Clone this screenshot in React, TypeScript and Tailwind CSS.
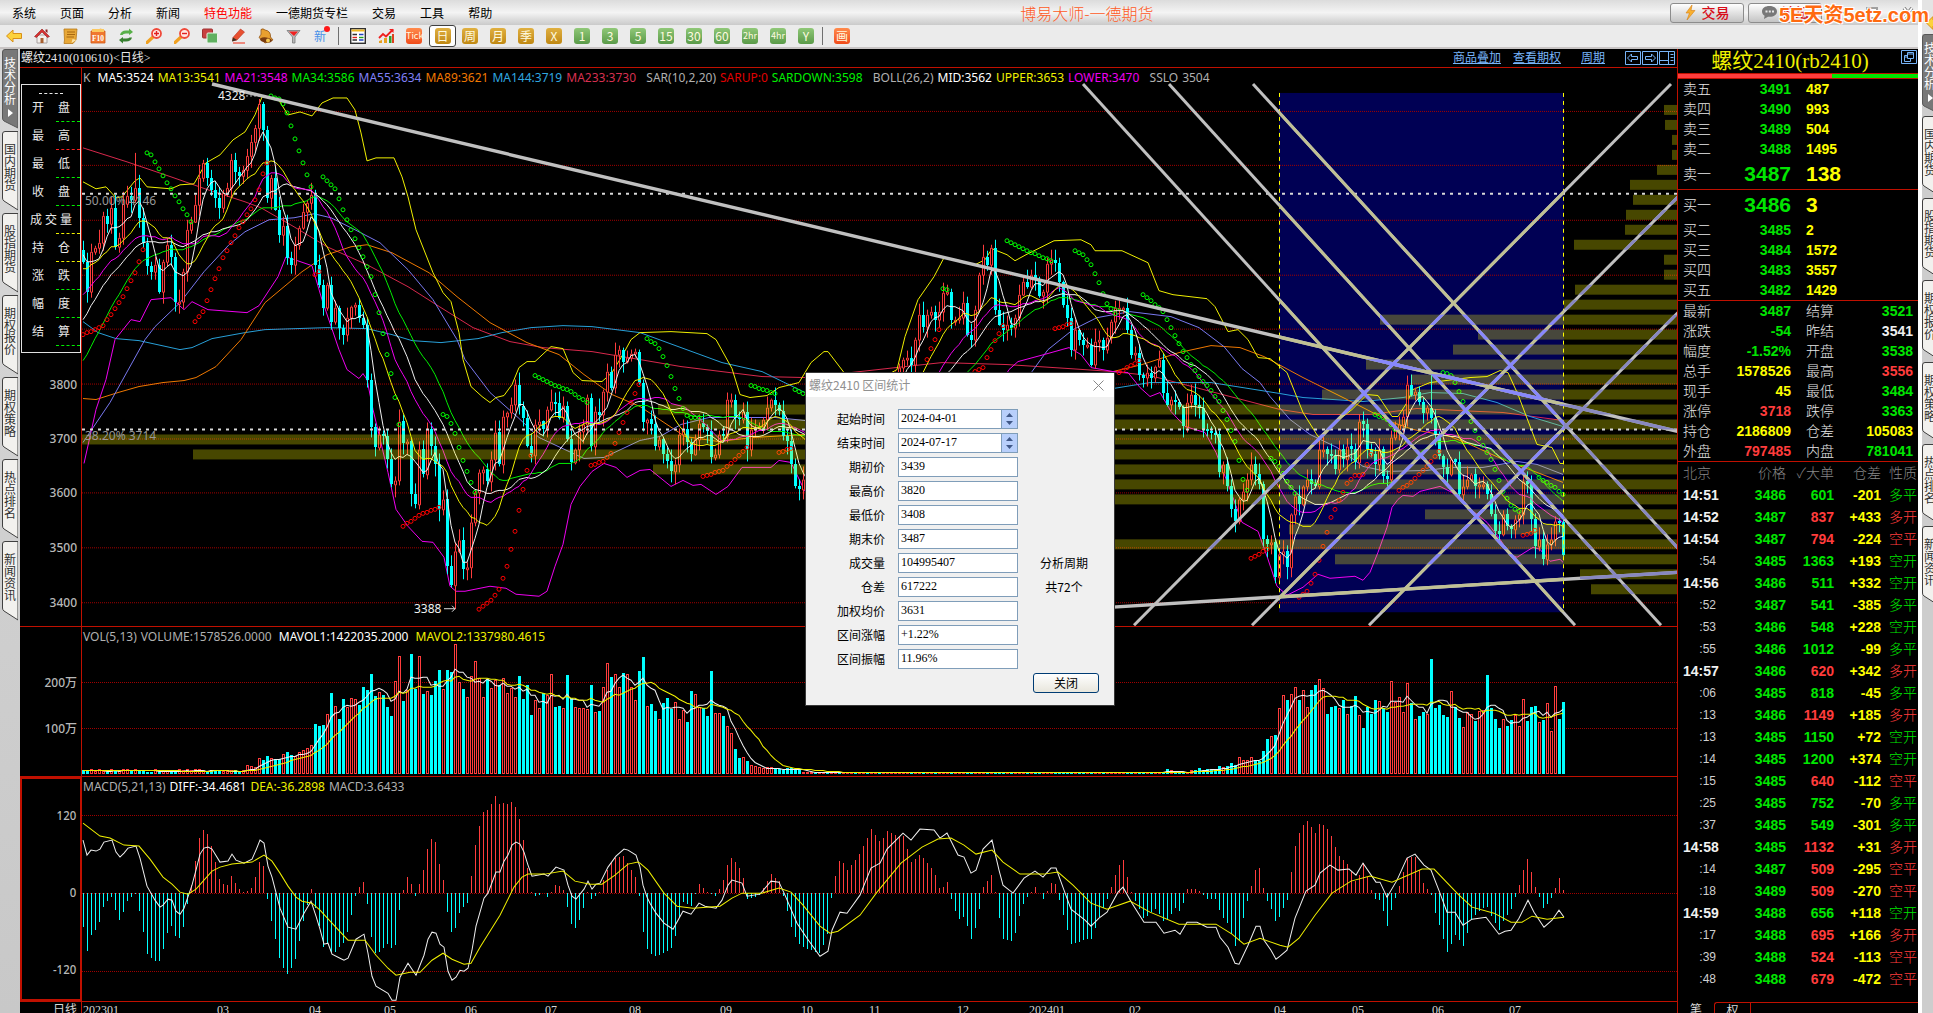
import React from "react";

type Pt = [number, number];

const CJK = "font-['Noto_Sans_CJK_SC',sans-serif]";
const LATIN = "font-['Noto_Sans','Noto_Sans_CJK_SC',sans-serif]";
const NUM = "font-['Liberation_Sans','Noto_Sans_CJK_SC',sans-serif]";
const SONG = "font-['Liberation_Serif','Noto_Sans_CJK_SC',serif]";

/* ---------- chart data: one value for each trading day, in chart units ---------- */

const X0 = 83;
const STEP = 4;

// closes of the days before the first visible bar, used to seed the averages
const SEED = [
  520, 515, 512, 505, 500, 495, 488, 480, 470, 452, 440, 425, 410, 395, 372, 360, 348, 340, 330, 322, 316, 306, 300,
  292, 286, 280, 276, 270, 262, 258, 256, 255, 252, 250,
];

const CLOSES = [
  262, 292, 252, 248, 243, 216, 224, 208, 247, 238, 204, 196, 200, 188, 218, 243, 266, 272, 265, 292, 262, 245, 257,
  302, 302, 272, 230, 222, 205, 178, 163, 178, 190, 198, 208, 193, 188, 160, 172, 176, 170, 156, 142, 128, 104, 130,
  198, 178, 210, 235, 226, 258, 265, 245, 228, 212, 203, 195, 265, 285, 308, 285, 322, 308, 328, 335, 318, 307, 305,
  318, 325, 380, 428, 448, 435, 437, 460, 485, 481, 422, 444, 442, 495, 505, 450, 475, 430, 447, 465, 510, 500, 567,
  586, 552, 541, 570, 568, 523, 493, 473, 470, 482, 460, 433, 465, 417, 413, 405, 385, 406, 418, 447, 456, 425, 422,
  430, 410, 402, 403, 418, 406, 440, 463, 450, 432, 425, 398, 447, 412, 415, 392, 372, 388, 355, 350, 362, 358, 354,
  352, 383, 423, 420, 425, 447, 440, 455, 462, 472, 465, 435, 430, 443, 455, 440, 424, 428, 432, 458, 455, 435, 437,
  400, 400, 418, 420, 412, 450, 430, 428, 427, 420, 408, 400, 405, 411, 437, 442, 465, 487, 490, 480, 478, 472, 476,
  468, 462, 465, 455, 450, 452, 444, 440, 436, 440, 432, 428, 430, 424, 420, 422, 412, 400, 390, 376, 368, 360, 358,
  365, 340, 315, 327, 315, 312, 320, 312, 293, 292, 320, 320, 318, 303, 335, 340, 310, 275, 257, 265, 248, 310, 325,
  330, 325, 328, 318, 295, 282, 287, 275, 280, 296, 292, 264, 260, 263, 282, 305, 318, 350, 330, 340, 345, 345, 365,
  342, 340, 350, 338, 322, 308, 308, 308, 330, 355, 353, 375, 378, 373, 378, 367, 360, 393, 405, 400, 402, 407, 427,
  403, 395, 405, 408, 430, 432, 434, 435, 473, 465, 487, 510, 522, 500, 492, 480, 465, 475, 485, 540, 545, 543, 578,
  555, 552, 568, 515, 497, 505, 487, 480, 485, 487, 450, 450, 455, 456, 470, 450, 460, 447, 450, 463, 422, 425, 450,
  455, 465, 450, 477, 480, 438, 430, 425, 417, 385, 395, 392, 402, 413, 408, 418, 435, 457, 468, 475, 460, 463, 495,
  487, 480, 475, 487, 485, 485, 495, 515, 532, 535, 515, 527, 530, 520, 515, 482, 485, 520, 547, 540, 560, 545, 540,
  522, 523, 556,
];

const VOL_RUNS: [number, number[]][] = [
  [
    247,
    [
      7, 6, 5, 14, 13, 17, 14, 14, 14, 18, 21, 18, 16, 20, 22, 24, 27, 49, 47, 48, 58, 80, 66, 54, 74, 65, 74, 73, 68,
      86, 83, 99, 77, 80, 78, 66, 57, 91, 116, 72, 82, 119, 84, 116, 79, 81, 78, 92, 103, 83, 103, 101, 128, 90, 84,
      75, 96, 111, 94, 75, 94, 84, 92, 88, 94, 79, 84, 75, 97, 74, 88, 58, 72, 64, 80, 77, 98, 66, 67, 64, 98, 75, 65,
      64, 64, 63, 88, 60, 62, 85, 109, 96, 98, 85, 100, 98, 85, 72, 102, 116, 66, 69, 62, 53, 70, 75, 64, 70, 53, 62,
      51, 82, 78, 65, 65, 57, 102, 59, 59, 57, 46, 39, 24, 15, 15, 12, 7, 6, 5, 4, 5, 5, 5, 4, 3, 5, 5, 4, 3,
    ],
  ],
  [
    1163,
    [
      2, 4, 2, 1, 1, 1, 1, 2, 3, 5, 2, 4, 4, 4, 7, 5, 7, 10, 8, 15, 12, 12, 15, 13, 12, 22, 34, 36, 38, 64, 77, 73,
      78, 85, 73, 82, 65, 83, 88, 93, 84, 59, 66, 67, 64, 73, 58, 67, 77, 57, 45, 66, 59, 73, 71, 65, 61, 91, 70, 75,
      60, 89, 70, 53, 57, 61, 58, 114, 65, 68, 58, 56, 81, 66, 55, 45, 60, 58, 52, 61, 62, 98, 65, 54, 45, 53, 47, 53,
      57, 46, 73, 52, 66, 67, 50, 53, 69, 41, 86, 54, 71,
    ],
  ],
];

const UPPER: Pt[] = [
  [83, 182], [96, 189], [106, 187], [116, 198], [122, 197], [135, 181], [140, 178], [147, 187], [171, 189],
  [180, 185], [194, 184], [206, 163], [220, 155], [233, 140], [245, 132], [255, 115], [262, 97], [278, 99],
  [288, 115], [300, 112], [312, 116], [322, 103], [333, 98], [347, 98], [355, 110], [361, 133], [367, 161],
  [376, 158], [394, 158], [402, 177], [408, 197], [416, 230], [433, 273], [443, 293], [451, 302], [459, 333],
  [463, 360], [471, 387], [482, 397], [490, 403], [496, 398], [504, 396], [512, 385], [519, 368], [527, 362],
  [535, 362], [551, 347], [563, 349], [573, 373], [582, 381], [602, 382], [612, 373], [624, 353], [631, 340],
  [640, 333], [671, 332], [707, 334], [716, 340], [732, 369], [740, 395], [750, 398], [767, 396], [779, 388],
  [799, 383], [811, 363], [824, 352], [828, 352], [844, 373], [870, 385], [897, 370], [905, 337], [918, 300],
  [934, 277], [944, 258], [956, 260], [975, 265], [985, 260], [992, 249], [1007, 255], [1015, 261], [1026, 255],
  [1054, 241], [1081, 240], [1091, 245], [1095, 251], [1122, 251], [1148, 263], [1159, 291], [1173, 295],
  [1207, 299], [1215, 307], [1228, 332], [1238, 330], [1248, 340], [1258, 358], [1270, 359], [1287, 373],
  [1303, 413], [1318, 437], [1323, 437], [1337, 422], [1352, 410], [1367, 395], [1378, 396], [1392, 417],
  [1398, 417], [1407, 403], [1413, 390], [1430, 383], [1470, 378], [1487, 377], [1500, 371], [1508, 373],
  [1518, 395], [1537, 445], [1552, 448], [1560, 464], [1563, 464],
];

const LOWER: Pt[] = [
  [84, 464], [96, 410], [106, 380], [115, 340], [131, 320], [140, 322], [151, 300], [171, 298], [184, 310],
  [192, 302], [208, 310], [247, 313], [259, 306], [278, 277], [286, 257], [312, 266], [322, 300], [339, 350],
  [347, 370], [359, 379], [363, 374], [367, 380], [373, 410], [388, 473], [396, 510], [408, 527], [422, 542],
  [433, 543], [444, 558], [450, 587], [456, 592], [465, 592], [490, 587], [506, 589], [516, 595], [539, 597],
  [547, 592], [555, 567], [563, 545], [571, 505], [580, 487], [592, 472], [604, 464], [616, 468], [627, 478],
  [640, 471], [650, 470], [671, 487], [683, 481], [693, 486], [701, 485], [716, 495], [728, 487], [742, 468],
  [771, 468], [779, 461], [791, 463], [805, 492], [840, 520], [900, 500], [980, 420], [1009, 370], [1018, 362],
  [1044, 355], [1069, 348], [1081, 355], [1091, 368], [1113, 372], [1128, 373], [1140, 388], [1150, 397],
  [1160, 393], [1171, 412], [1185, 427], [1205, 433], [1216, 453], [1230, 490], [1242, 523], [1258, 532],
  [1267, 557], [1277, 587], [1287, 596], [1303, 588], [1318, 575], [1330, 579], [1355, 577], [1363, 581],
  [1370, 573], [1378, 553], [1387, 528], [1392, 508], [1398, 500], [1403, 496], [1413, 497], [1420, 492],
  [1440, 487], [1452, 493], [1467, 507], [1487, 523], [1500, 540], [1510, 555], [1517, 558], [1533, 548],
  [1540, 550], [1550, 562], [1560, 560], [1563, 563],
];

const MA55: Pt[] = [
  [83, 443], [110, 403], [145, 340], [155, 327], [180, 303], [204, 272], [229, 245], [245, 232], [269, 220],
  [294, 218], [314, 214], [331, 218], [355, 230], [380, 243], [408, 270], [433, 300], [457, 340], [465, 360],
  [490, 393], [518, 418], [539, 438], [571, 453], [584, 459], [604, 458], [640, 441], [660, 437], [681, 425],
  [709, 418], [775, 418], [805, 421], [900, 455], [990, 420], [1032, 372], [1048, 350], [1073, 330], [1097, 318],
  [1130, 312], [1171, 317], [1199, 328], [1224, 347], [1242, 369], [1260, 383], [1270, 397], [1290, 420],
  [1310, 435], [1337, 448], [1363, 467], [1387, 472], [1427, 471], [1450, 468], [1483, 468], [1517, 462],
  [1537, 465], [1563, 475],
];

const MA89: Pt[] = [
  [83, 399], [96, 400], [118, 393], [139, 387], [163, 383], [184, 381], [196, 378], [216, 367], [241, 340],
  [265, 303], [302, 272], [327, 255], [351, 247], [367, 245], [392, 253], [429, 273], [457, 297], [490, 323],
  [527, 343], [559, 355], [584, 375], [612, 395], [640, 407], [664, 423], [685, 437], [718, 442], [754, 438],
  [805, 435], [900, 430], [1000, 400], [1113, 372], [1142, 365], [1179, 353], [1211, 346], [1240, 348],
  [1264, 357], [1303, 378], [1337, 395], [1357, 405], [1390, 422], [1413, 430], [1450, 437], [1470, 445],
  [1503, 460], [1537, 473], [1563, 483],
];

const MA144: Pt[] = [
  [83, 322], [98, 333], [116, 339], [139, 341], [180, 350], [192, 348], [212, 339], [245, 333], [265, 330],
  [327, 328], [367, 329], [392, 335], [412, 341], [441, 343], [478, 339], [502, 333], [531, 328], [563, 326],
  [592, 327], [640, 333], [681, 348], [722, 363], [762, 372], [805, 393], [900, 405], [1000, 400], [1113, 389],
  [1150, 383], [1211, 383], [1280, 394], [1303, 398], [1363, 402], [1403, 398], [1430, 393], [1463, 394],
  [1497, 403], [1530, 417], [1563, 427],
];

const MA233: Pt[] = [
  [83, 148], [127, 162], [171, 177], [208, 190], [245, 202], [261, 208], [294, 227], [327, 247], [367, 265],
  [408, 287], [441, 308], [473, 328], [510, 342], [543, 348], [592, 352], [640, 360], [681, 367], [762, 377],
  [805, 378], [860, 372], [905, 367], [942, 363], [1007, 365], [1069, 369], [1113, 372], [1150, 376], [1211, 392],
  [1280, 410], [1313, 415], [1370, 415], [1417, 409], [1457, 411], [1503, 413], [1563, 421],
];

const DIFF: Pt[] = [
  [83, 840], [87, 855], [91, 850], [96, 851], [100, 849], [104, 842], [112, 840], [116, 852], [120, 857],
  [124, 853], [128, 848], [136, 846], [140, 858], [147, 886], [155, 900], [160, 907], [163, 905], [168, 899],
  [172, 900], [176, 911], [180, 914], [184, 908], [192, 885], [196, 870], [200, 854], [204, 848], [208, 847],
  [212, 849], [220, 862], [228, 861], [232, 854], [236, 860], [244, 863], [252, 859], [256, 850], [260, 840],
  [264, 843], [268, 866], [272, 877], [280, 908], [288, 927], [296, 929], [304, 913], [311, 901], [316, 916],
  [320, 929], [324, 944], [328, 943], [332, 954], [340, 958], [344, 960], [348, 958], [356, 939], [364, 934],
  [368, 953], [372, 976], [376, 986], [388, 993], [392, 1000], [396, 1000], [400, 977], [408, 963], [416, 975],
  [424, 955], [428, 939], [432, 932], [436, 933], [440, 944], [444, 947], [448, 971], [452, 980], [456, 977],
  [460, 970], [464, 971], [468, 968], [472, 950], [476, 926], [484, 898], [488, 893], [496, 872], [500, 872],
  [504, 861], [508, 855], [512, 845], [516, 842], [520, 844], [524, 852], [528, 865], [532, 876], [544, 874],
  [548, 876], [556, 867], [564, 870], [568, 885], [572, 896], [576, 899], [584, 889], [588, 881], [592, 889],
  [596, 884], [600, 883], [608, 867], [616, 856], [624, 849], [628, 850], [636, 855], [640, 867], [643, 885],
  [647, 897], [650, 903], [656, 913], [664, 923], [673, 929], [683, 911], [691, 914], [699, 903], [705, 906],
  [716, 908], [722, 900], [728, 885], [732, 880], [742, 883], [747, 896], [760, 894], [771, 881], [779, 882],
  [785, 895], [797, 923], [807, 938], [820, 956], [828, 951], [832, 930], [840, 912], [847, 913], [860, 895],
  [871, 868], [880, 863], [887, 849], [903, 833], [911, 840], [920, 829], [934, 830], [940, 838], [947, 833],
  [958, 855], [964, 857], [971, 873], [976, 870], [983, 849], [992, 840], [999, 870], [1003, 885], [1013, 893],
  [1024, 878], [1035, 871], [1043, 877], [1051, 868], [1056, 868], [1064, 890], [1071, 909], [1085, 920],
  [1091, 926], [1099, 918], [1107, 912], [1118, 892], [1123, 887], [1132, 903], [1144, 922], [1156, 922],
  [1164, 933], [1175, 930], [1180, 934], [1187, 922], [1197, 922], [1207, 927], [1216, 927], [1220, 937],
  [1228, 947], [1235, 963], [1239, 964], [1248, 945], [1256, 926], [1260, 926], [1264, 940], [1271, 950],
  [1276, 959], [1280, 956], [1287, 950], [1295, 918], [1306, 891], [1315, 885], [1320, 873], [1330, 865],
  [1338, 870], [1349, 869], [1356, 875], [1363, 863], [1376, 882], [1380, 882], [1387, 897], [1397, 880],
  [1407, 858], [1415, 854], [1424, 865], [1431, 870], [1440, 893], [1447, 912], [1455, 912], [1463, 925],
  [1472, 919], [1486, 917], [1499, 934], [1505, 931], [1511, 930], [1519, 918], [1528, 900], [1534, 912],
  [1544, 927], [1552, 920], [1559, 910], [1564, 917],
];

const DEA: Pt[] = [
  [83, 823], [100, 836], [110, 838], [124, 845], [139, 846], [150, 859], [163, 877], [172, 884], [180, 892],
  [188, 894], [196, 889], [212, 871], [220, 867], [232, 864], [252, 862], [264, 855], [272, 861], [280, 873],
  [288, 886], [296, 897], [302, 901], [312, 903], [320, 910], [332, 923], [348, 940], [365, 940], [376, 955],
  [388, 968], [396, 975], [410, 972], [420, 972], [432, 960], [443, 953], [452, 959], [464, 964], [471, 963],
  [480, 947], [500, 915], [514, 887], [522, 877], [528, 874], [545, 874], [563, 871], [575, 881], [590, 884],
  [602, 884], [615, 875], [628, 864], [638, 862], [640, 863], [648, 870], [664, 893], [677, 906], [693, 908],
  [720, 906], [732, 898], [742, 893], [762, 893], [779, 888], [791, 892], [803, 905], [820, 926], [830, 933],
  [838, 931], [860, 915], [877, 892], [901, 863], [922, 847], [938, 839], [951, 838], [964, 845], [976, 854],
  [992, 850], [1003, 862], [1020, 874], [1044, 874], [1058, 872], [1073, 885], [1091, 903], [1107, 909],
  [1130, 901], [1150, 912], [1179, 924], [1216, 924], [1232, 934], [1244, 944], [1260, 938], [1280, 945],
  [1288, 947], [1299, 938], [1315, 915], [1332, 893], [1351, 881], [1370, 876], [1392, 882], [1422, 869],
  [1434, 869], [1459, 895], [1472, 907], [1494, 913], [1511, 922], [1522, 922], [1532, 916], [1547, 919],
  [1564, 917],
];

const SAR_DOWN: Pt[][] = [
  [[147, 153], [151, 155], [155, 162], [167, 183], [180, 204], [191, 222]],
  [[271, 96], [279, 99], [284, 105], [288, 116], [296, 142], [304, 166], [311, 187]],
  [[323, 177], [335, 189], [351, 230], [363, 257], [371, 277], [380, 318], [388, 360], [392, 378], [399, 425]],
  [[443, 415], [448, 417], [455, 434], [463, 461], [471, 483], [475, 493]],
  [[535, 376], [551, 384], [571, 392], [587, 403]],
  [[647, 339], [655, 344], [660, 350], [668, 368], [675, 389], [683, 409], [688, 418], [699, 418]],
  [[751, 386], [775, 394]],
  [[795, 390], [803, 394]],
  [[943, 289], [947, 290]],
  [[1007, 241], [1029, 252], [1051, 261]],
  [[1075, 251], [1084, 256], [1091, 265], [1099, 283], [1107, 304], [1115, 314]],
  [
    [1143, 295], [1151, 301], [1163, 312], [1171, 328], [1183, 352], [1199, 377], [1211, 391], [1219, 402],
    [1227, 420], [1235, 442], [1243, 480], [1247, 491],
  ],
  [[1271, 459], [1277, 463], [1287, 482], [1295, 494]],
  [[1375, 415], [1387, 420], [1397, 432]],
  [
    [1443, 373], [1452, 376], [1459, 392], [1471, 422], [1479, 439], [1492, 462], [1503, 492], [1512, 508],
    [1519, 512],
  ],
  [[1539, 478], [1555, 488], [1563, 495]],
];

const SAR_UP: Pt[][] = [
  [[83, 335], [102, 327], [111, 315], [123, 297], [135, 273], [143, 250]],
  [[195, 322], [203, 312], [211, 290], [223, 258], [239, 228], [251, 209], [259, 190], [263, 174], [267, 163]],
  [[315, 275], [319, 272]],
  [[403, 527], [419, 516], [439, 508]],
  [[479, 610], [491, 601], [499, 590], [507, 567], [515, 532], [523, 490], [527, 471], [531, 456]],
  [[591, 466], [603, 462], [612, 453], [620, 430], [628, 410], [636, 392], [640, 383]],
  [[703, 477], [723, 471], [735, 460], [747, 448]],
  [[779, 453], [791, 449]],
  [[927, 360], [931, 349], [939, 330]],
  [[975, 372], [983, 368], [987, 358], [995, 341], [1003, 326]],
  [[1055, 329], [1071, 324]],
  [[1119, 373], [1131, 366], [1139, 361]],
  [[1251, 559], [1267, 550]],
  [
    [1299, 598], [1307, 592], [1315, 575], [1323, 547], [1331, 518], [1339, 501], [1347, 484], [1355, 476],
    [1363, 475], [1371, 455],
  ],
  [[1399, 491], [1411, 483], [1427, 467], [1439, 452]],
  [[1523, 536], [1531, 534], [1535, 531]],
];

// [top, left edge] of each volume-at-price bar; all of them end at the right edge
const PROFILE: Pt[] = [
  [105, 1664], [120, 1665], [135, 1672], [150, 1672], [165, 1657], [180, 1630], [195, 1633], [210, 1626],
  [225, 1625], [240, 1574], [255, 1664], [270, 1664], [285, 1575], [300, 1564], [315, 1380], [330, 1478],
  [345, 1453], [360, 1366], [375, 1411], [390, 1322], [405, 658], [420, 690], [435, 82], [450, 193], [465, 653],
  [480, 1000], [495, 1000], [510, 1425], [525, 1289], [540, 1000], [555, 1335], [570, 1580], [585, 1591],
];

const TRENDS = [
  "M1083 84L1575 626", "M1169 84L1661 626", "M1253 84L1678 549", "M1671 84L1134 626", "M1678 197L1252 626",
  "M1678 313L1369 626",
];
const THICK_TRENDS = ["M212 84L1678 432", "M820 626L1678 573"];

/* ---------- helpers ---------- */

const xAt = (i: number) => X0 + i * STEP;
const at = (pts: Pt[], x: number) => {
  if (x <= pts[0][0]) return pts[0][1];
  for (let i = 1; i < pts.length; i++) {
    if (x <= pts[i][0]) {
      const [ax, ay] = pts[i - 1];
      const [bx, by] = pts[i];
      return ay + ((by - ay) * (x - ax)) / (bx - ax);
    }
  }
  return pts[pts.length - 1][1];
};
const poly = (pts: Pt[]) => pts.map((p) => p.join(",")).join(" ");
const noise = (i: number) => {
  const v = Math.sin(i * 127.1 + 11.7) * 43758.5453;
  return v - Math.floor(v);
};
const average = (n: number): Pt[] => {
  const all = [...SEED, ...CLOSES];
  return CLOSES.map((_, i) => {
    const end = i + SEED.length + 1;
    const win = all.slice(Math.max(0, end - n), end);
    return [xAt(i), Math.round(win.reduce((a, b) => a + b, 0) / win.length)];
  });
};

const volumes = CLOSES.map((_, i) => {
  const x = xAt(i);
  for (const [start, run] of VOL_RUNS) {
    const k = Math.round((x - start) / STEP);
    if (k >= 0 && k < run.length) return run[k];
  }
  return x < 247 ? 2 + Math.round(noise(i)) : 1;
});
const volAverage = (n: number): Pt[] =>
  volumes.map((_, i) => {
    const win = volumes.slice(Math.max(0, i - n + 1), i + 1);
    return [xAt(i), Math.round(774 - win.reduce((a, b) => a + b, 0) / win.length)];
  });

const opens = CLOSES.map((_, i) => (i === 0 ? 250 : CLOSES[i - 1]));
const isUp = (i: number) => CLOSES[i] <= opens[i];

let upBody = "";
let upWick = "";
let downBody = "";
let downWick = "";
let upVol = "";
let downVol = "";
let upMacd = "";
let downMacd = "";
CLOSES.forEach((c, i) => {
  const x = xAt(i);
  const o = opens[i];
  const top = Math.min(c, o);
  const bottom = Math.max(c, o, top + 2);
  let hi = top - Math.round(noise(i) * 12 + 1);
  let lo = bottom + Math.round(noise(i + 900) * 12 + 1);
  if (x === 263 || x === 259) hi = Math.max(hi, 96);
  if (x === 455) lo = 610;
  if (x === 135) hi = 153;
  if (x === 1431) hi = 373;
  if (x === 1407) hi = 376;
  if (isUp(i)) {
    upBody += `M${x - 1} ${top}h2v${bottom - top}h-2z`;
    upWick += `M${x} ${hi}V${top}M${x} ${bottom}V${lo}`;
    upVol += `M${x - 1} ${774 - volumes[i]}h2V774h-2z`;
  } else {
    downBody += `M${x - 1} ${top}h3v${bottom - top}h-3z`;
    downWick += `M${x} ${hi}V${lo}`;
    downVol += `M${x - 1} ${774 - volumes[i]}h3V774h-3z`;
  }
  const m = Math.round(893 - 2 * (at(DEA, x) - at(DIFF, x)));
  if (m < 893) upMacd += `M${x} 893V${m}`;
  else downMacd += `M${x} 893V${m}`;
});

const dots = (runs: Pt[][]) =>
  runs.flatMap((run, r) => {
    const out: React.ReactNode[] = [];
    for (let x = run[0][0]; x <= run[run.length - 1][0]; x += STEP) {
      out.push(<circle key={`${r}-${x}`} cx={x} cy={Math.round(at(run, x))} r="2" />);
    }
    return out;
  });

/* ---------- charts ---------- */

function Grid({ rows }: { rows: number[] }) {
  return (
    <g stroke="#a00000" strokeDasharray="1 1" shapeRendering="crispEdges">
      {rows.map((y) => (
        <path key={y} d={`M82 ${y}.5H1677`} />
      ))}
    </g>
  );
}

function TrendLines({ color }: { color: string }) {
  return (
    <g stroke={color} fill="none">
      {TRENDS.map((d) => (
        <path key={d} d={d} strokeWidth="3" />
      ))}
      {THICK_TRENDS.map((d) => (
        <path key={d} d={d} strokeWidth="3.4" />
      ))}
    </g>
  );
}

function PriceChart() {
  return (
    <svg className="absolute inset-0 size-full" viewBox="82 68 1595 559" preserveAspectRatio="none" aria-label="日线">
      <defs>
        <clipPath id="range">
          <rect x="1279" y="93" width="285" height="520" />
        </clipPath>
        <clipPath id="profile">
          {PROFILE.map(([y, x]) => (
            <rect key={y} x={x} y={y} width={1677 - x} height="10" />
          ))}
        </clipPath>
      </defs>
      <rect x="1279" y="93" width="285" height="520" fill="#000054" />
      <Grid rows={[111, 165, 220, 275, 329, 384, 439, 493, 548, 603]} />
      <g fill="none" strokeWidth="1">
        <polyline points={poly(MA233)} stroke="#d8284c" />
        <polyline points={poly(MA144)} stroke="#28a0d8" />
        <polyline points={poly(MA89)} stroke="#f07800" />
        <polyline points={poly(MA55)} stroke="#7878f0" />
        <polyline points={poly(UPPER)} stroke="#f0f000" />
        <polyline points={poly(LOWER)} stroke="#f000f0" />
      </g>
      <g shapeRendering="crispEdges">
        <path d={upWick} stroke="#ff3c3c" fill="none" transform="translate(.5 0)" />
        <path d={upBody} stroke="#ff3c3c" fill="#000" transform="translate(.5 .5)" />
        <path d={downWick} stroke="#00ffff" fill="none" transform="translate(.5 0)" />
        <path d={downBody} fill="#00ffff" />
      </g>
      <g fill="none" strokeWidth="1">
        <polyline points={poly(average(34))} stroke="#00f000" />
        <polyline points={poly(average(26))} stroke="#f0f0f0" />
        <polyline points={poly(average(21))} stroke="#f000f0" />
        <polyline points={poly(average(13))} stroke="#f0f000" />
        <polyline points={poly(average(5))} stroke="#f0f0f0" />
      </g>
      <g fill="none" stroke="#00ff00">{dots(SAR_DOWN)}</g>
      <g fill="none" stroke="#ff0000">{dots(SAR_UP)}</g>
      <g fill="#ffff00" fillOpacity=".28">
        {PROFILE.map(([y, x]) => (
          <rect key={y} x={x} y={y} width={1677 - x} height="10" />
        ))}
      </g>
      <g stroke="#ffff00" strokeDasharray="4 4">
        <path d="M1279.5 93V613" />
        <path d="M1563.5 93V613" />
      </g>
      <g stroke="#d8d8d8" strokeWidth="2" strokeDasharray="3 5">
        <path d="M82 194H1677" />
        <path d="M82 430H1677" />
      </g>
      <TrendLines color="#c0c0c0" />
      <g clipPath="url(#range)">
        <TrendLines color="#c0c094" />
      </g>
      <g clipPath="url(#profile)">
        <TrendLines color="#8888c0" />
        <g clipPath="url(#range)">
          <TrendLines color="#8888fc" />
        </g>
      </g>
      <g className={`${LATIN} text-[12px]`} fill="#f0f0f0">
        <text x="218" y="100">4328</text>
        <path d="M246 96H262" stroke="#c0c0c0" strokeDasharray="2 2" />
        <text x="414" y="614">3388</text>
        <path d="M444 609.5H455M452 606.5L455 609.5L452 612.5" stroke="#e0e0e0" fill="none" />
      </g>
      <g className={`${LATIN} text-[12px]`} fill="#989898">
        <text x="85" y="205">50.00% 4146</text>
        <text x="85" y="441">38.20% 3714</text>
      </g>
    </svg>
  );
}

function VolumeChart() {
  return (
    <svg className="absolute inset-0 size-full" viewBox="82 628 1595 148" preserveAspectRatio="none" aria-label="成交量">
      <Grid rows={[683, 729]} />
      <g shapeRendering="crispEdges">
        <path d={upVol} stroke="#ff3c3c" fill="none" transform="translate(.5 -.5)" />
        <path d={downVol} fill="#00ffff" />
      </g>
      <polyline points={poly(volAverage(5))} stroke="#f0f0f0" fill="none" />
      <polyline points={poly(volAverage(13))} stroke="#f0f000" fill="none" />
    </svg>
  );
}

function MacdChart() {
  return (
    <svg className="absolute inset-0 size-full" viewBox="82 777 1595 224" preserveAspectRatio="none" aria-label="MACD">
      <Grid rows={[815, 893, 971]} />
      <g shapeRendering="crispEdges" transform="translate(.5 0)">
        <path d={upMacd} stroke="#ff3c3c" />
        <path d={downMacd} stroke="#00ffff" />
      </g>
      <polyline points={poly(DIFF)} stroke="#f0f0f0" fill="none" />
      <polyline points={poly(DEA)} stroke="#f0f000" fill="none" />
    </svg>
  );
}

/* ---------- small parts ---------- */

function Legend({ items }: { items: [string, string][] }) {
  return (
    <div className={`absolute top-0.5 left-px flex gap-1 whitespace-pre text-[12px] leading-4 ${LATIN}`}>
      {items.map(([text, color]) => (
        <span key={text} className={color}>
          {text}
        </span>
      ))}
    </div>
  );
}

function Axis({ top, height, labels }: { top: number; height: number; labels: [string, number][] }) {
  return (
    <svg
      className={`absolute inset-0 size-full text-[12px] font-medium ${LATIN}`}
      viewBox={`20 ${top} 61 ${height}`}
      preserveAspectRatio="none"
      fill="#b8b8b8"
    >
      {labels.map(([t, y]) => (
        <text key={t} x="77" y={y + 5} textAnchor="end">
          {t}
        </text>
      ))}
    </svg>
  );
}

const SIDE_TABS = ["国内期货", "股指期货", "期权报价", "期权策略", "热点排名", "新闻资讯"];

function SideTabs() {
  return (
    <nav className={`flex w-4 flex-col gap-0.5 text-[12px] leading-3 ${CJK}`}>
      <div className="relative h-[80px]">
        <svg className="absolute inset-0" width="16" height="80" viewBox="0 0 16 80">
          <path d="M16 79L2 72Q.5 71 .5 69V3Q.5 .5 3 .5H16z" fill="#787878" stroke="#585858" />
          <path d="M6 60v8l5-4z" fill="#fff" />
        </svg>
        <button className="relative w-full px-0.5 pt-2 text-white">技术分析</button>
      </div>
      {SIDE_TABS.map((t) => (
        <div key={t} className="relative h-[80px]">
          <svg className="absolute inset-0" width="16" height="80" viewBox="0 0 16 80">
            <path d="M16 79L2 70Q.5 69 .5 67V3Q.5 .5 3 .5H16z" fill="#f2f1ee" stroke="#404040" />
          </svg>
          <button className="relative w-full px-0.5 pt-3 text-[#303030]">{t}</button>
        </div>
      ))}
    </nav>
  );
}

function Tile({ text, tone, small }: { text: string; tone: string; small?: boolean }) {
  return (
    <button
      className={`h-4 w-4 shrink-0 rounded-[3px] text-center leading-4 text-[#fffbe0] ${CJK} ${tone} ${
        small ? "text-[9px]" : "text-[12px]"
      }`}
    >
      {text}
    </button>
  );
}

const GOLD = "bg-linear-to-b from-[#e0b040] to-[#c08810]";
const GREEN = "bg-linear-to-b from-[#90c878] to-[#5a9a48]";
const ORANGE = "bg-linear-to-b from-[#ff8a4c] to-[#f04a18]";

function Icon({ label, children }: { label: string; children: React.ReactNode }) {
  return (
    <button aria-label={label} className="size-4 shrink-0">
      <svg width="16" height="16" viewBox="0 0 16 16" fill="none">
        {children}
      </svg>
    </button>
  );
}

function Separator() {
  return <span className="-mr-px -ml-1 h-[18px] w-px shrink-0 bg-[#707070]" />;
}

function Toolbar() {
  return (
    <div className="flex h-6 shrink-0 items-center gap-3 border-b-2 border-[#c8c4c4] bg-[#ebebeb] pl-1.5">
      <Icon label="后退">
        <path d="M.5 8L7 2v3.500h8.500v5H7V14z" fill="#fcd23c" stroke="#d89018" />
      </Icon>
      <Icon label="首页">
        <path d="M3 7h10v8H3z" fill="#f4f0ec" stroke="#a8a0a0" />
        <path d="M8 1L.5 8.500l2 1L8 4l5.500 5.500 2-1z" fill="#d83030" stroke="#902020" strokeWidth=".6" />
        <path d="M11.500 1.500h2V5l-2-1.500z" fill="#902020" />
        <path d="M6.500 10h3v5h-3z" fill="#a86030" />
      </Icon>
      <Icon label="资讯">
        <path d="M2 1h13l-1 11-3 3.500H2L2.500 12z" fill="#e8a838" stroke="#b87818" strokeWidth=".8" />
        <path d="M5 4h8M5 6.500h8M4.500 9H12" stroke="#a86810" />
        <path d="M9.500 15l1-4 4 1z" fill="#fbe4a8" />
      </Icon>
      <Icon label="F10">
        <path d="M2 3l9-2.500 3 2.500" fill="#f8b040" />
        <path d="M1 3h14v12H1z" fill="#f07830" stroke="#d05818" strokeWidth=".8" />
        <path d="M2 1h12v3H2z" fill="#fcc860" />
        <text x="8" y="12.500" textAnchor="middle" fontSize="7.500" fontWeight="bold" fill="#fff" className={SONG}>
          F10
        </text>
      </Icon>
      <Icon label="刷新">
        <path d="M2 7Q3 2.500 8 2.500h3V.5L15 4l-4 3V5.500H8Q5 5.500 4.500 7z" fill="#58b048" />
        <path d="M14 9.500Q13 13.500 8 13.500H5v2L1 12l4-3v1.500h3Q11 10.500 11.500 9.500z" fill="#388030" />
      </Icon>
      <Icon label="放大">
        <path d="M7 9l-6 5.500" stroke="#f0a020" strokeWidth="3.200" strokeLinecap="round" />
        <circle cx="10.500" cy="5.500" r="4.500" fill="#ffe8e4" stroke="#f04838" strokeWidth="1.800" />
        <path d="M8 5.500h5M10.500 3v5" stroke="#e02020" strokeWidth="1.400" />
      </Icon>
      <Icon label="缩小">
        <path d="M7 9l-6 5.500" stroke="#f0a020" strokeWidth="3.200" strokeLinecap="round" />
        <circle cx="10.500" cy="5.500" r="4.500" fill="#ffe8e4" stroke="#f04838" strokeWidth="1.800" />
        <path d="M8 5.500h5" stroke="#e02020" strokeWidth="1.400" />
      </Icon>
      <Icon label="叠加">
        <rect x=".5" y="1" width="10" height="9" rx="1" fill="#c84040" stroke="#a03030" />
        <rect x="5" y="5" width="10.500" height="10" rx="1" fill="#60b060" stroke="#e8f4e8" />
      </Icon>
      <Icon label="画线">
        <path d="M3 9.500L10.500 1l4 3L7 12l-4.500 1z" fill="#e85030" stroke="#b83020" strokeWidth=".6" />
        <path d="M3 9.500L7 12l-5 1.500z" fill="#403020" />
        <path d="M3 15h12" stroke="#f06050" strokeWidth="1.400" />
      </Icon>
      <Icon label="预警">
        <path d="M3 1.500Q5 0 7 2q6 1 5.500 7l2.500 3-8 3L1 9.500Q4 7 3 1.500z" fill="#e8a030" stroke="#905010" strokeWidth=".8" />
        <ellipse cx="8" cy="12" rx="6" ry="2.600" fill="#7a3c10" transform="rotate(8 8 12)" />
        <circle cx="10" cy="12.500" r="2" fill="#f8c850" />
      </Icon>
      <Icon label="筛选">
        <path d="M1 2.500h13L9 9v6H6.500V9z" fill="#b8b8b8" stroke="#787878" strokeWidth=".8" />
        <path d="M3 3.500h9L8 8z" fill="#f02020" />
      </Icon>
      <button className={`relative h-4 w-4 shrink-0 text-left text-[12px] leading-4 text-[#4890e8] ${CJK}`}>
        新
        <span className="absolute -top-0.5 right-0 size-1.5 rounded-full bg-[#ff1818]" />
      </button>
      <Separator />
      <Icon label="报价">
        <rect x=".7" y=".7" width="14.600" height="14.600" fill="#fff" stroke="#303030" strokeWidth="1.400" />
        <path d="M1.500 2.500h13" stroke="#f0b820" strokeWidth="2" />
        <path d="M2.500 6.500H7M2.500 12H7" stroke="#303030" strokeWidth="1.400" />
        <path d="M2.500 9.500H7" stroke="#e02020" strokeWidth="1.400" />
        <path d="M9 6.500h4.500M9 12h4.500" stroke="#2040c0" strokeWidth="1.400" />
        <path d="M9 9.500h4.500" stroke="#20a020" strokeWidth="1.400" />
      </Icon>
      <Icon label="走势">
        <path d="M1 13v2h3v-3zM6 10h3v5H6z" fill="#e8a020" />
        <path d="M11 8h2.500v7H11z" fill="#30a030" />
        <path d="M14 6h2v9h-2z" fill="#e04020" />
        <path d="M1 10l4-4 3 2.500L15 1.500" stroke="#f02020" strokeWidth="1.800" />
        <path d="M11 1h4.500v4z" fill="#f02020" />
      </Icon>
      <Tile text="Tick" tone={ORANGE} small />
      <span className="-mr-1.5 -ml-[5px] flex h-[22px] w-[27px] shrink-0 items-center justify-center rounded-[3px] border border-[#404040] bg-white">
        <Tile text="日" tone={GOLD} />
      </span>
      {["周", "月", "季", "X"].map((t) => (
        <Tile key={t} text={t} tone={GOLD} />
      ))}
      {["1", "3", "5", "15", "30", "60"].map((t) => (
        <Tile key={t} text={t} tone={GREEN} />
      ))}
      <Tile text="2hr" tone={GREEN} small />
      <Tile text="4hr" tone={GREEN} small />
      <Tile text="Y" tone={GREEN} />
      <Separator />
      <Tile text="画" tone={ORANGE} />
    </div>
  );
}

const MENU = ["系统", "页面", "分析", "新闻", "特色功能", "一德期货专栏", "交易", "工具", "帮助"];

function MenuBar() {
  return (
    <header
      className={`flex h-[25px] shrink-0 items-center bg-linear-to-b from-[#dcdcdc] via-[#f4f4f4] to-[#cacaca] text-[12px] ${CJK}`}
    >
      <nav className="flex flex-[1017] gap-6 pl-3">
        {MENU.map((m) => (
          <button key={m} className={m === "特色功能" ? "text-[#ff0000]" : "text-black"}>
            {m}
          </button>
        ))}
      </nav>
      <h1 className="text-[16px] font-light text-[#ff5a1e]">博易大师-一德期货</h1>
      <div className="flex flex-[767] items-center justify-end gap-1 pr-1">
        <button className="flex h-5 w-[74px] items-center justify-center gap-1.5 rounded-[3px] border border-[#8c8c8c] bg-linear-to-b from-white to-[#c4c4c4] text-[14px] font-medium text-[#d80c18]">
          <svg width="11" height="15" viewBox="0 0 11 15">
            <path d="M7 0L1 8h3.500L2 15l8-9.500H6z" fill="#f8b030" stroke="#d88010" strokeWidth=".6" />
          </svg>
          交易
        </button>
        <button className="flex h-5 w-[74px] items-center justify-center gap-1 rounded-[3px] border border-[#8c8c8c] bg-linear-to-b from-white to-[#c4c4c4] text-[14px] font-medium text-[#d80c18]">
          <svg width="17" height="15" viewBox="0 0 17 15">
            <path d="M8.500 1C4 1 1 3.200 1 6.500c0 2 1 3.300 2.600 4.300L3 14l4-2.200h1.500c4.500 0 7.500-2.200 7.500-5.300S13 1 8.500 1z" fill="#787878" />
            <path d="M4.500 6.500h2M7.800 6.500h2M11 6.500h2" stroke="#e8e8e8" strokeWidth="2" />
          </svg>
          论坛
        </button>
        <div className="ml-3 flex h-4 items-center gap-2 text-[#909090]">
          <button aria-label="最小化" className="h-0.5 w-3 border border-[#909090] bg-white" />
          <button aria-label="还原" className="ml-2 size-3 border-2 border-[#a0a0a0] bg-white" />
          <button aria-label="关闭窗口" className="ml-4 w-3">
            <svg width="12" height="12" viewBox="0 0 12 12">
              <path d="M2 1l8 10M10 1L2 11" stroke="#808080" strokeWidth="3.600" />
              <path d="M2 1l8 10M10 1L2 11" stroke="#fff" strokeWidth="1.800" />
            </svg>
          </button>
        </div>
      </div>
    </header>
  );
}

const OHLC: [string, string][] = [
  ["开盘", "border-[#00f000]"],
  ["最高", "border-[#ff2020]"],
  ["最低", "border-[#00f000]"],
  ["收盘", "border-[#00f000]"],
  ["成交量", "border-[#f0f000]"],
  ["持仓", "border-[#f0f000]"],
  ["涨跌", "border-[#00f000]"],
  ["幅度", "border-[#00f000]"],
  ["结算", "border-[#00f000]"],
];

function CursorBox() {
  return (
    <dl className={`absolute top-4 left-px w-[60px] border border-[#e0e0e0] bg-black pt-2 pb-1.5 text-[12px] text-[#e8e8e8] ${CJK}`}>
      <div className="mx-auto w-6 border-t border-dashed border-[#e8e8e8]" />
      {OHLC.map(([t, c]) => (
        <div key={t} className="flex h-7 flex-col">
          <dt className={`flex flex-1 items-end justify-between pt-1 leading-4 ${t.length === 3 ? "px-2" : "px-2.5"}`}>
            {t.split("").map((ch) => (
              <span key={ch}>{ch}</span>
            ))}
          </dt>
          <dd className={`mt-1.5 ml-auto w-6 border-t border-dashed ${c}`} />
        </div>
      ))}
    </dl>
  );
}

const DATES: [string, number][] = [
  ["202301", 83], ["03", 217], ["04", 309], ["05", 384], ["06", 465], ["07", 545], ["08", 629], ["09", 720],
  ["10", 801], ["11", 869], ["12", 957], ["202401", 1029], ["02", 1129], ["04", 1274], ["05", 1352], ["06", 1432],
  ["07", 1509],
];

function Workspace() {
  return (
    <main className="flex min-w-0 flex-1 flex-col bg-black">
      <div className={`flex h-[19px] shrink-0 items-center border-b border-[#c01000] pl-px text-[12px] text-[#e8e8e8] ${SONG}`}>
        <span className="flex-1">螺纹2410(010610)&lt;日线&gt;</span>
        <span className="flex items-center text-[#78b4f8]">
          <a href="#overlay" className="mr-3 underline">商品叠加</a>
          <a href="#options" className="mr-5 underline">查看期权</a>
          <a href="#period" className="mr-5 underline">周期</a>
          <svg width="52" height="16" viewBox="0 0 52 16" fill="none" stroke="#78b4f8">
            <path d="M.5 1.500h15v13H.5zM17.500 1.500h15v13h-15zM34.500 1.500h15v13h-15z" />
            <path d="M2.500 8l4-4v2.500h6v3h-6V12zM30.500 8l-4-4v2.500h-6v3h6V12zM34.500 10.500h9M43.500 1.500v13M45.500 4.500h3M45.500 7.500h3M45.500 10.500h3" />
          </svg>
        </span>
      </div>
      <section className="flex min-h-0 flex-[560] border-b border-[#c01000]">
        <div className="relative w-[62px] shrink-0 border-r border-[#c01000]">
          <Axis
            top={68}
            height={559}
            labels={[["3800", 384], ["3700", 439], ["3600", 493], ["3500", 548], ["3400", 603]]}
          />
          <CursorBox />
        </div>
        <div className="relative min-w-0 flex-1">
          <PriceChart />
          <Legend
            items={[
              ["K ", "text-[#b0b0b0]"],
              ["MA5:3524", "text-white"],
              ["MA13:3541", "text-[#f0f000]"],
              ["MA21:3548", "text-[#f000f0]"],
              ["MA34:3586", "text-[#00f000]"],
              ["MA55:3634", "text-[#8080f8]"],
              ["MA89:3621", "text-[#f07800]"],
              ["MA144:3719", "text-[#30a8e0]"],
              ["MA233:3730 ", "text-[#d83050]"],
              [" SAR(10,2,20)", "text-[#b0b0b0]"],
              ["SARUP:0", "text-[#e00000]"],
              ["SARDOWN:3598 ", "text-[#00f000]"],
              [" BOLL(26,2)", "text-[#b0b0b0]"],
              ["MID:3562", "text-white"],
              ["UPPER:3653", "text-[#f0f000]"],
              ["LOWER:3470 ", "text-[#f000f0]"],
              [" SSLO", "text-[#b0b0b0]"],
              ["3504", "text-[#b0b0b0]"],
            ]}
          />
        </div>
      </section>
      <section className="flex min-h-0 flex-[149] border-b border-[#c01000]">
        <div className="relative w-[62px] shrink-0 border-r border-[#c01000]">
          <Axis top={628} height={148} labels={[["200万", 683], ["100万", 729]]} />
        </div>
        <div className="relative min-w-0 flex-1">
          <VolumeChart />
          <Legend
            items={[
              ["VOL(5,13)", "text-[#b0b0b0]"],
              ["VOLUME:1578526.0000 ", "text-[#b0b0b0]"],
              ["MAVOL1:1422035.2000 ", "text-white"],
              ["MAVOL2:1337980.4615", "text-[#f0f000]"],
            ]}
          />
        </div>
      </section>
      <section className="flex min-h-0 flex-[225] border-b border-[#c01000]">
        <div className="relative w-[62px] shrink-0 border-2 border-[#c01000]">
          <Axis top={778} height={224} labels={[["120", 815], ["0", 893], ["-120", 971]]} />
        </div>
        <div className="relative min-w-0 flex-1">
          <MacdChart />
          <Legend
            items={[
              ["MACD(5,21,13)", "text-[#b0b0b0]"],
              ["DIFF:-34.4681", "text-white"],
              ["DEA:-36.2898", "text-[#f0f000]"],
              ["MACD:3.6433", "text-[#b0b0b0]"],
            ]}
          />
        </div>
      </section>
      <div className={`flex h-[11px] shrink-0 overflow-hidden text-[12px] leading-4 text-[#d8d8d8] ${SONG}`}>
        <span className="w-[62px] shrink-0 border-r border-[#c01000] pr-1 text-right">日线</span>
        <svg className="h-4 min-w-0 flex-1" viewBox="82 0 1595 16" preserveAspectRatio="none" fill="#d8d8d8">
          {DATES.map(([t, x]) => (
            <text key={t + x} x={x} y="12">
              {t}
            </text>
          ))}
        </svg>
      </div>
    </main>
  );
}

/* ---------- quote panel ---------- */

const G = "text-[#00e600]";
const R = "text-[#ff3c3c]";
const Y = "text-[#ffff00]";
const W = "text-[#f0f0f0]";

const ASKS: [string, string, string][] = [
  ["卖五", "3491", "487"],
  ["卖四", "3490", "993"],
  ["卖三", "3489", "504"],
  ["卖二", "3488", "1495"],
  ["卖一", "3487", "138"],
];
const BIDS: [string, string, string][] = [
  ["买一", "3486", "3"],
  ["买二", "3485", "2"],
  ["买三", "3484", "1572"],
  ["买四", "3483", "3557"],
  ["买五", "3482", "1429"],
];
const STATS: [string, string, string, string, string, string][] = [
  ["最新", "3487", G, "结算", "3521", G],
  ["涨跌", "-54", G, "昨结", "3541", W],
  ["幅度", "-1.52%", G, "开盘", "3538", G],
  ["总手", "1578526", Y, "最高", "3556", R],
  ["现手", "45", Y, "最低", "3484", G],
  ["涨停", "3718", R, "跌停", "3363", G],
  ["持仓", "2186809", Y, "仓差", "105083", Y],
  ["外盘", "797485", R, "内盘", "781041", G],
];
const TICKS: [string, string, string, string, string, string][] = [
  ["14:51", "3486", "601", G, "-201", "多平"],
  ["14:52", "3487", "837", R, "+433", "多开"],
  ["14:54", "3487", "794", R, "-224", "空平"],
  [":54", "3485", "1363", G, "+193", "空开"],
  ["14:56", "3486", "511", G, "+332", "空开"],
  [":52", "3487", "541", G, "-385", "多平"],
  [":53", "3486", "548", G, "+228", "空开"],
  [":55", "3486", "1012", G, "-99", "多平"],
  ["14:57", "3486", "620", R, "+342", "多开"],
  [":06", "3485", "818", G, "-45", "多平"],
  [":13", "3486", "1149", R, "+185", "多开"],
  [":13", "3485", "1150", G, "+72", "空开"],
  [":14", "3485", "1200", G, "+374", "空开"],
  [":15", "3485", "640", R, "-112", "空平"],
  [":25", "3485", "752", G, "-70", "多平"],
  [":37", "3485", "549", G, "-301", "多平"],
  ["14:58", "3485", "1132", R, "+31", "多开"],
  [":14", "3487", "509", R, "-295", "空平"],
  [":18", "3489", "509", R, "-270", "空平"],
  ["14:59", "3488", "656", G, "+118", "空开"],
  [":17", "3488", "695", R, "+166", "多开"],
  [":39", "3488", "524", R, "-113", "空平"],
  [":48", "3488", "679", R, "-472", "空平"],
];

function Depth({ rows, big }: { rows: [string, string, string][]; big: string }) {
  return (
    <table className="w-full table-fixed border-b border-[#c01000]">
      <colgroup>
        <col className="w-[50px]" />
        <col className="w-[63px]" />
        <col />
      </colgroup>
      <tbody>
        {rows.map(([l, p, q]) => (
          <tr key={l} className={l === big ? "h-[30px]" : "h-5"}>
            <th className="pl-[5px] text-left font-light text-[#e8e8e8]">{l}</th>
            <td className={`text-right font-bold ${G} ${l === big ? "text-[21px] leading-6" : ""}`}>{p}</td>
            <td className={`pl-[15px] font-bold ${Y} ${l === big ? "text-[21px] leading-6" : ""}`}>{q}</td>
          </tr>
        ))}
      </tbody>
    </table>
  );
}

function QuotePanel() {
  return (
    <aside className={`flex w-[241px] shrink-0 flex-col border-l border-[#c01000] bg-black text-[14px] leading-5 ${NUM}`}>
      <div className="relative h-6 shrink-0">
        <h2 className={`pr-4 text-center text-[21px] leading-6 text-[#f0f000] ${SONG}`}>螺纹2410(rb2410)</h2>
        <svg className="absolute top-px right-px" width="16" height="14" viewBox="0 0 16 14" fill="none" stroke="#78b4f8">
          <path d="M.5 .5h15v13H.5zM6.500 2.500h6v6h-6zM6.500 4h6M3.500 5.500h3M3.500 5.500v6h6v-3M3.500 7h3" />
        </svg>
      </div>
      <div className="flex h-1.5 shrink-0 border-y border-[#c01000]">
        <div className="w-[64%] bg-[#ff3c3c]" />
        <div className="flex-1 bg-[#00e600]" />
      </div>
      <Depth rows={ASKS} big="卖一" />
      <Depth rows={BIDS} big="买一" />
      <table className="w-full table-fixed border-b border-[#c01000]">
        <colgroup>
          <col className="w-[50px]" />
          <col className="w-[63px]" />
          <col className="w-[60px]" />
          <col />
        </colgroup>
        <tbody>
          {STATS.map(([a, b, c, d, e, f]) => (
            <tr key={a} className="h-5">
              <th className="pl-[5px] text-left font-light text-[#e8e8e8]">{a}</th>
              <td className={`text-right font-bold ${c}`}>{b}</td>
              <th className="pl-[15px] text-left font-light text-[#e8e8e8]">{d}</th>
              <td className={`pr-[5px] text-right font-bold ${f}`}>{e}</td>
            </tr>
          ))}
        </tbody>
      </table>
      <table className="w-full table-fixed whitespace-nowrap">
        <colgroup>
          <col className="w-[44px]" />
          <col className="w-[64px]" />
          <col className="w-[48px]" />
          <col className="w-[47px]" />
          <col />
        </colgroup>
        <thead>
          <tr className="h-[22px] text-[#888888]">
            <th className="pl-[5px] text-left font-light">北京</th>
            <th className="text-right font-light">价格</th>
            <th className="text-right font-light">✓大单</th>
            <th className="text-right font-light">仓差</th>
            <th className="pr-px text-right font-light">性质</th>
          </tr>
        </thead>
        <tbody>
          {TICKS.map(([t, p, v, c, d, n], i) => (
            <tr key={i} className="h-[22px]">
              {t.length > 3 ? (
                <td className={`pl-[5px] font-bold ${W}`}>{t}</td>
              ) : (
                <td className="pr-1.5 text-right text-[12px] text-[#d0d0d0]">{t}</td>
              )}
              <td className={`text-right font-bold ${G}`}>{p}</td>
              <td className={`text-right font-bold ${c}`}>{v}</td>
              <td className={`text-right font-bold ${Y}`}>{d}</td>
              <td className={`pr-px text-right font-light ${n === "多开" || n === "空平" ? R : G}`}>{n}</td>
            </tr>
          ))}
        </tbody>
      </table>
      <div className="flex-1" />
      <div className="flex h-[11px] shrink-0 overflow-hidden text-[12px] leading-4 text-[#d8d8d8]">
        <button className="h-4 w-9">笔</button>
        <button className="h-4 w-9 rounded-tl-[3px] border-t border-l border-[#c01000]">权</button>
        <span className="h-4 flex-1 border-t border-l border-[#c01000]" />
      </div>
    </aside>
  );
}

/* ---------- dialog ---------- */

const FIELDS: [string, string, boolean][] = [
  ["起始时间", "2024-04-01", true],
  ["结束时间", "2024-07-17", true],
  ["期初价", "3439", false],
  ["最高价", "3820", false],
  ["最低价", "3408", false],
  ["期末价", "3487", false],
  ["成交量", "104995407", false],
  ["仓差", "617222", false],
  ["加权均价", "3631", false],
  ["区间涨幅", "+1.22%", false],
  ["区间振幅", "11.96%", false],
];

function RangeDialog() {
  return (
    <div
      role="dialog"
      aria-label="螺纹2410 区间统计"
      className={`absolute top-[372px] left-[805px] w-[310px] border border-[#383838] bg-[#f0f0f0] pb-3 text-[12px] text-black ${CJK}`}
    >
      <div className="flex h-6 items-center justify-between bg-white pr-2.5 pl-[3px]">
        <span className="text-[#909090]">螺纹2410 区间统计</span>
        <button aria-label="关闭对话框">
          <svg width="11" height="11" viewBox="0 0 11 11">
            <path d="M.5 .5l10 10M10.500 .5l-10 10" stroke="#888" />
          </svg>
        </button>
      </div>
      <div className="flex pt-3">
        <div className="flex flex-col gap-1">
          {FIELDS.map(([label, value, spin], i) => (
            <div key={label} className="flex h-5 items-center">
              <label htmlFor={`field-${i}`} className="w-[79px] text-right leading-5">
                {label}
              </label>
              <div className="ml-[13px] flex h-5 w-[120px] border border-[#7f9db9] bg-white">
                <input
                  id={`field-${i}`}
                  defaultValue={value}
                  className={`h-full w-0 flex-1 bg-white pb-0.5 pl-0.5 text-[12px] outline-none ${SONG}`}
                />
                {spin && (
                  <button aria-label={`${label}调整`} className="w-4 border-l border-[#7f9db9] bg-[#b8cffb]">
                    <svg className="mx-auto" width="7" height="14" viewBox="0 0 7 14" fill="#405888">
                      <path d="M3.500 1L7 5H0zM3.500 13L0 9h7z" />
                    </svg>
                  </button>
                )}
              </div>
            </div>
          ))}
        </div>
        <div className="flex flex-1 flex-col items-center gap-1 pt-36 pr-1 leading-5">
          <p>分析周期</p>
          <p>共72个</p>
        </div>
      </div>
      <div className="flex justify-end pt-1 pr-[15px]">
        <button className="h-5 w-[66px] rounded-[3px] border border-[#003c74] bg-linear-to-b from-white to-[#e8e6dc] leading-4">
          关闭
        </button>
      </div>
    </div>
  );
}

export default function App() {
  return (
    <div className="relative flex h-screen min-h-0 w-full overflow-hidden bg-[#d0d0d0]">
      <div className="flex min-w-0 flex-1 flex-col">
        <MenuBar />
        <Toolbar />
        <div className="flex min-h-0 flex-1">
          <div className="w-5 shrink-0 bg-linear-to-b from-[#d8d8d8] to-[#c8c8c8] pl-0.5">
            <SideTabs />
          </div>
          <Workspace />
          <QuotePanel />
        </div>
      </div>
      <div className="w-[15px] shrink-0 overflow-hidden border-l-4 border-white bg-[#cdcdcd]">
        <div className="h-[34px] bg-[#e4e4e4] pt-4">
          <svg className="ml-1" width="16" height="14" viewBox="0 0 16 14">
            <path d="M.5 7L7 .5V4h8.500v6H7v3.500z" fill="#fcd23c" stroke="#d89018" />
          </svg>
        </div>
        <SideTabs />
      </div>
      <RangeDialog />
      <div
        className={`absolute top-[3px] right-1 text-[20px] leading-6 font-bold whitespace-nowrap text-[#ff6a10] [text-shadow:1px_1px_0_#fff,-1px_-1px_0_#fff,1px_-1px_0_#fff,-1px_1px_0_#fff] ${NUM}`}
      >
        5E天资5etz.com
      </div>
    </div>
  );
}
